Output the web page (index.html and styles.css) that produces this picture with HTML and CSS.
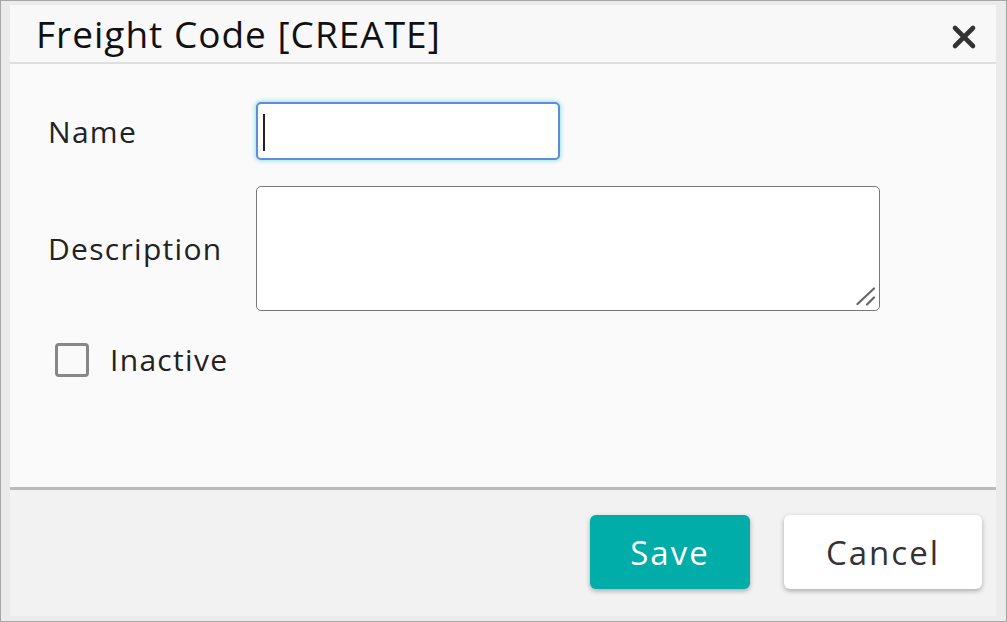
FILE: index.html
```html
<!DOCTYPE html>
<html lang="en">
<head>
<meta charset="utf-8">
<title>Freight Code [CREATE]</title>
<link rel="stylesheet" href="styles.css">
</head>
<body>
<div class="window">
  <div class="dialog">
    <div class="header">
      <h1 class="title">Freight Code [CREATE]</h1>
      <button class="close" aria-label="Close">
        <svg width="26" height="26" viewBox="0 0 26 26"><path d="M4 4 L22 22 M22 4 L4 22" stroke="#333" stroke-width="4.6" stroke-linecap="round"/></svg>
      </button>
    </div>
    <div class="body">
      <div class="form">
        <label class="label">Name</label>
        <div class="input focused"><span class="caret"></span></div>
        <label class="label">Description</label>
        <div class="area-wrap">
          <textarea class="textarea"></textarea>
          <svg class="grip" width="20" height="20" viewBox="0 0 20 20"><path d="M1.5 17 L18 1.5 M11 17.5 L18 10.5" stroke="#666" stroke-width="2.2" stroke-linecap="round"/></svg>
        </div>
      </div>
      <label class="check"><span class="box"></span><span class="check-text">Inactive</span></label>
    </div>
    <div class="footer">
      <button class="btn save">Save</button>
      <button class="btn cancel">Cancel</button>
    </div>
  </div>
</div>
</body>
</html>
```
FILE: styles.css
```css
html, body {
  margin: 0;
  padding: 0;
}
body {
  font-family: "Open Sans", "Noto Sans", sans-serif;
  background: #ffffff;
  color: #222;
}
.window {
  box-sizing: border-box;
  width: 1007px;
  height: 622px;
  border: 1px solid #a6a6a6;
  background: #ebebeb;
  padding: 4px 10px 5px 9px;
  display: flex;
}
.dialog {
  flex: 1;
  display: flex;
  flex-direction: column;
  background: #fafafa;
}
.header {
  height: 57px;
  border-bottom: 2px solid #dedede;
  background: #f8f8f8;
  display: flex;
  align-items: center;
  justify-content: space-between;
  padding: 0 19px 0 26px;
}
.title {
  margin: 0;
  font-size: 37px;
  font-weight: 400;
  letter-spacing: 1px;
  color: #111;
  line-height: 1;
}
.close {
  border: none;
  background: none;
  padding: 0;
  margin-top: 6px;
  width: 26px;
  height: 26px;
  display: flex;
}
.body {
  flex: 1;
  padding: 38px 0 0 38px;
}
.form {
  display: grid;
  grid-template-columns: 208px auto;
  row-gap: 26px;
  align-items: center;
  justify-items: start;
}
.label {
  font-size: 30px;
  letter-spacing: 1.3px;
  color: #222;
}
.input {
  box-sizing: border-box;
  width: 304px;
  height: 58px;
  border: 2px solid #5a8de0;
  border-radius: 5px;
  background: #fff;
  box-shadow: 0 0 4px 1px rgba(90, 210, 200, 0.6);
  padding: 10px 0 0 5px;
}
.caret {
  display: block;
  width: 2px;
  height: 37px;
  background: #222;
}
.area-wrap {
  position: relative;
  width: 624px;
  height: 125px;
}
.textarea {
  box-sizing: border-box;
  display: block;
  margin: 0;
  width: 624px;
  height: 125px;
  border: 1px solid #777;
  border-radius: 5px;
  background: #fff;
  resize: none;
}
.grip {
  position: absolute;
  right: 4px;
  bottom: 4px;
}
.check {
  display: flex;
  align-items: center;
  margin-top: 32px;
  padding-left: 7px;
  gap: 21px;
  height: 34px;
}
.box {
  box-sizing: border-box;
  width: 34px;
  height: 34px;
  border: 3px solid #878787;
  border-radius: 4px;
  background: #fafafa;
  filter: blur(0.4px);
}
.check-text {
  font-size: 30px;
  letter-spacing: 1.3px;
  line-height: 34px;
  color: #222;
}
.footer {
  box-sizing: border-box;
  height: 129px;
  border-top: 3px solid #bababa;
  background: #f2f2f2;
  display: flex;
  justify-content: flex-end;
  align-items: flex-start;
  padding: 25px 14px 0 0;
  gap: 34px;
}
.btn {
  height: 74px;
  border: none;
  border-radius: 6px;
  font-family: "Open Sans", "Noto Sans", sans-serif;
  font-size: 33px;
  letter-spacing: 2px;
  box-shadow: 0 2px 5px rgba(0, 0, 0, 0.3);
  padding: 0;
}
.save {
  width: 160px;
  background: #00ada8;
  color: #fff;
}
.cancel {
  width: 198px;
  background: #fff;
  color: #333;
}
```
